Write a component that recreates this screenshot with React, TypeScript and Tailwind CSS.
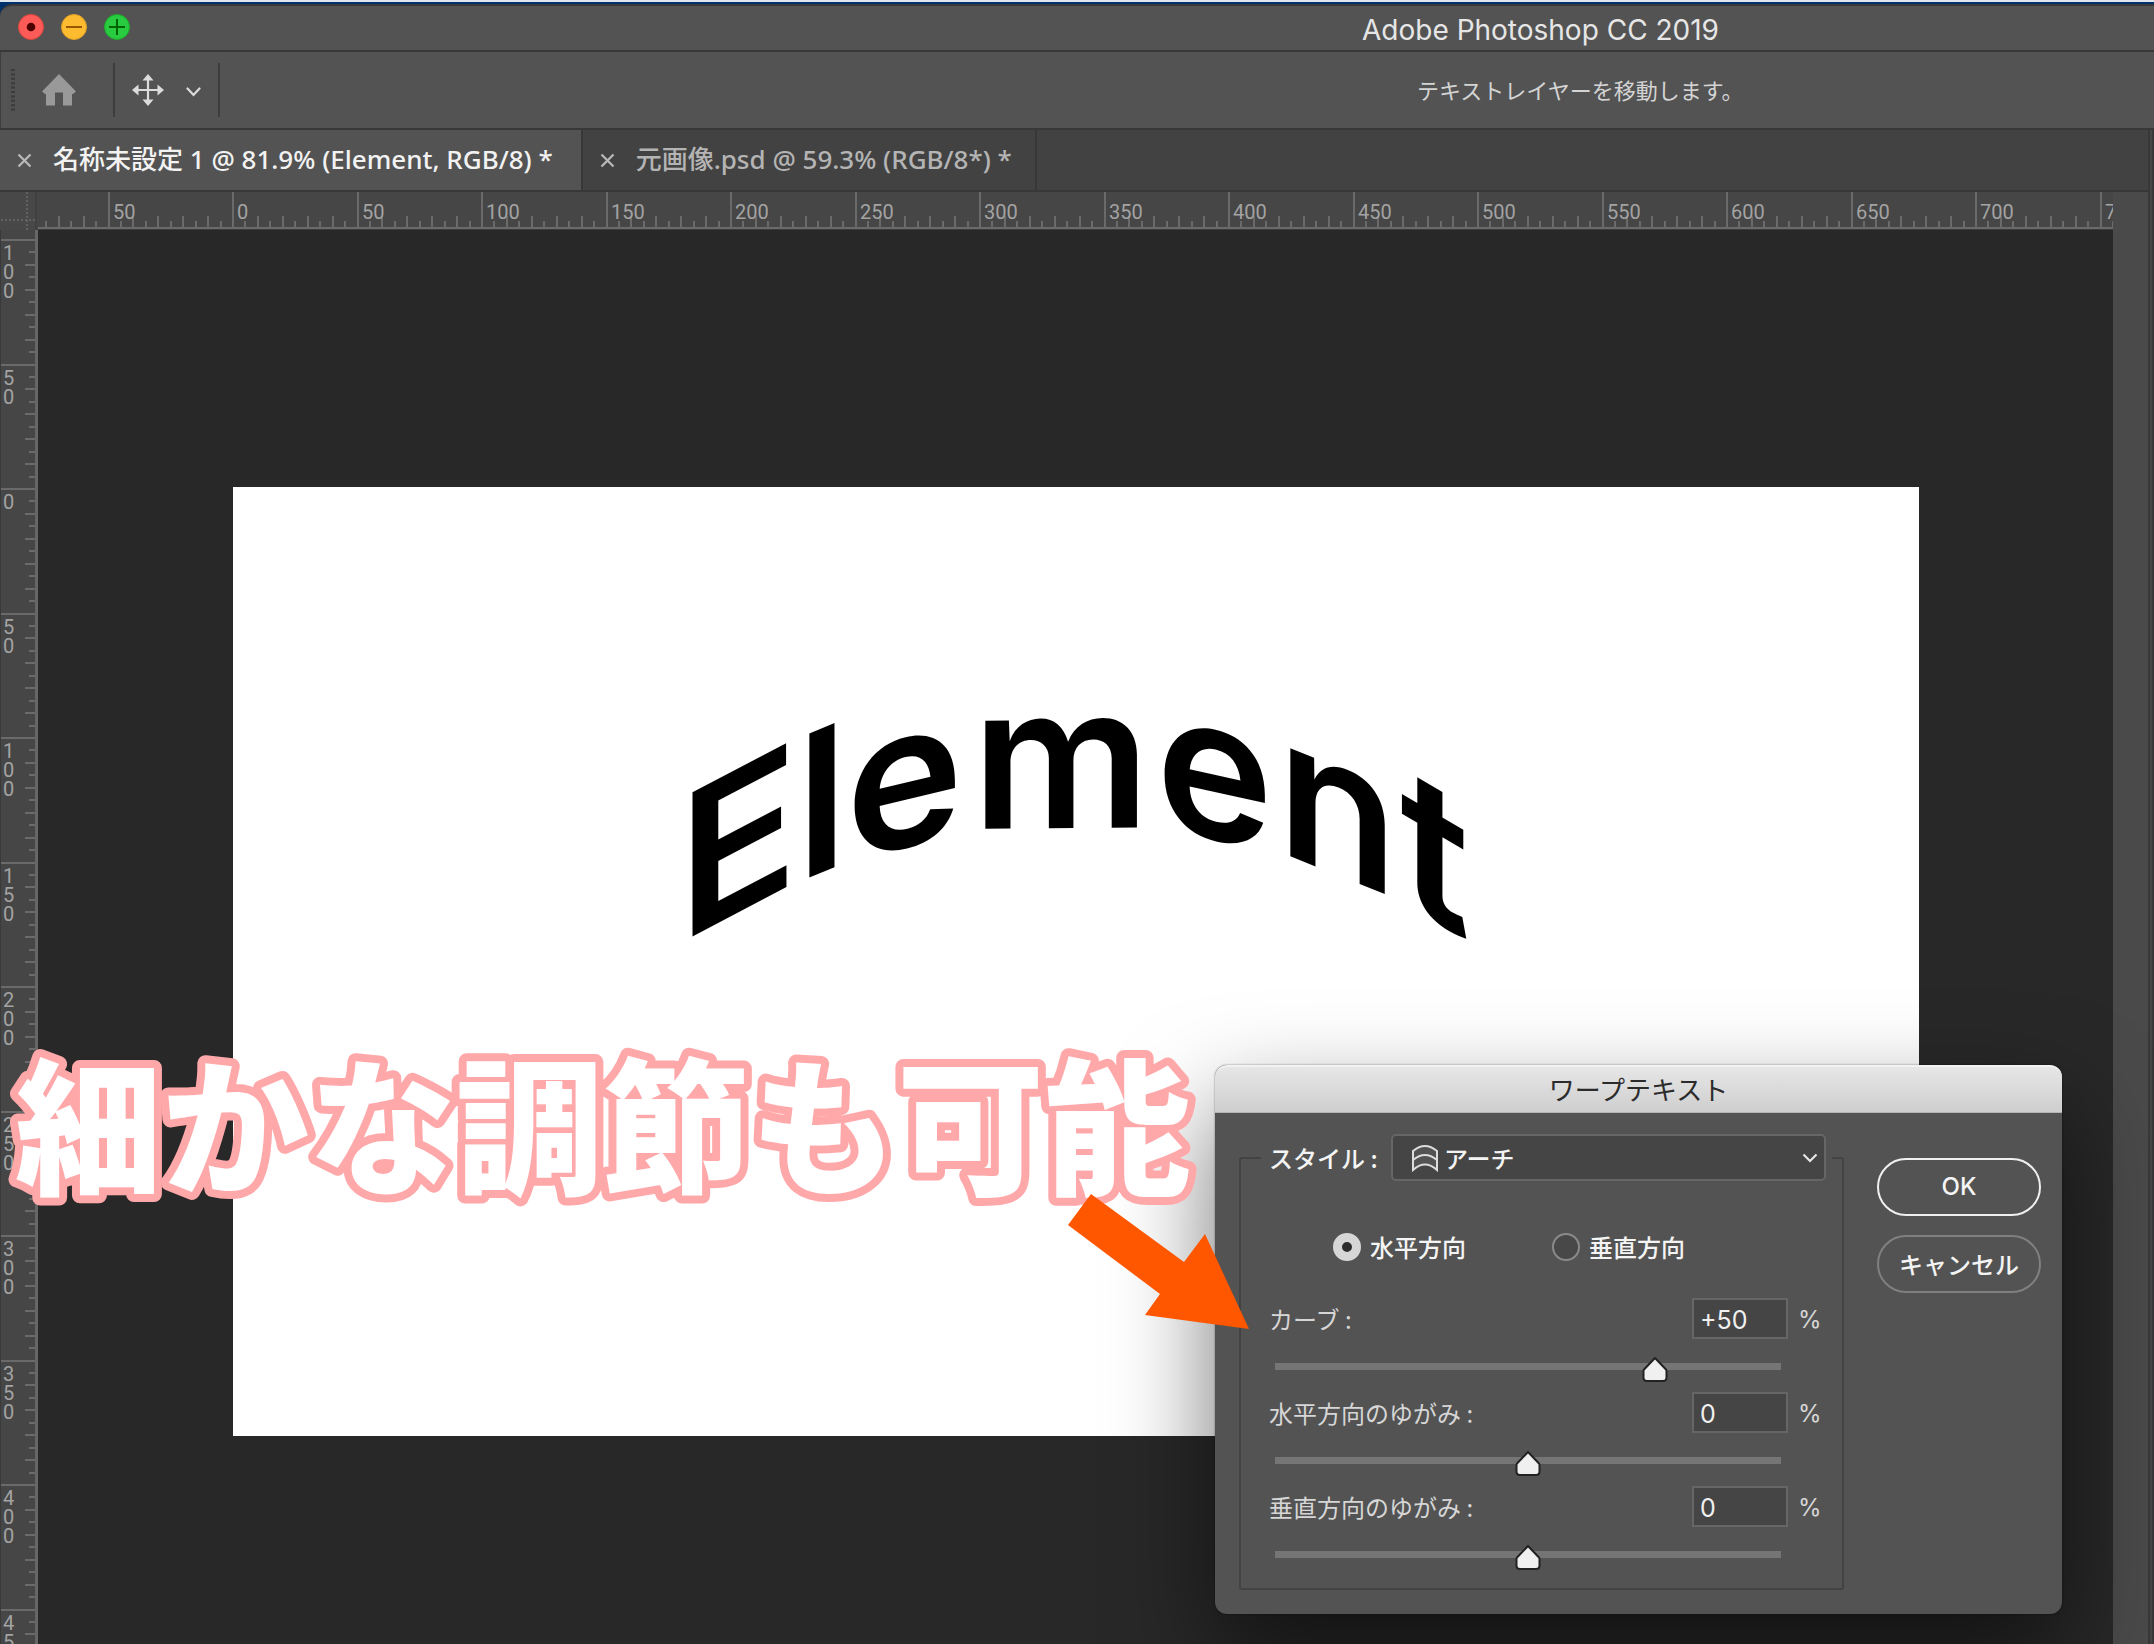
import { useState } from "react";

const STEP = 124.5;

/* Letters of the arch-warped text layer: baseline origin and vertical shear. */
const ARCH = [
  { ch: "E", x: 445, y: 457, k: -0.525 },
  { ch: "l", x: 563, y: 396, k: -0.41 },
  { ch: "e", x: 613, y: 374, k: -0.24 },
  { ch: "m", x: 739, y: 342, k: -0.01 },
  { ch: "e", x: 923, y: 339, k: 0.22 },
  { ch: "n", x: 1044, y: 364, k: 0.4 },
  { ch: "t", x: 1167, y: 414, k: 0.58 },
];

function TitleBar() {
  return (
    <header className="h-[52px] shrink-0 bg-[#01316a] border-t-2 border-[#dfe6ee] pt-[2px]">
      <div className="flex h-full rounded-tl-xl bg-[#535353] border-t-2 border-b-2 border-[#383838] items-center">
        <div className="flex items-center gap-[17px] pl-[18px] pb-[2px] w-[927px] shrink-0">
          <button aria-label="閉じる" className="size-[26px]">
            <svg viewBox="0 0 26 26"><circle cx="13" cy="13" r="12.5" fill="#fc5b57" stroke="#e2463f" /><circle cx="13" cy="13" r="4.3" fill="#4d0000" /></svg>
          </button>
          <button aria-label="しまう" className="size-[26px]">
            <svg viewBox="0 0 26 26"><circle cx="13" cy="13" r="12.5" fill="#fdbc2f" stroke="#e0a028" /><path d="M5 13h16" stroke="#985700" strokeWidth="2" /></svg>
          </button>
          <button aria-label="拡大" className="size-[26px]">
            <svg viewBox="0 0 26 26"><circle cx="13" cy="13" r="12.5" fill="#29cc41" stroke="#1aab29" /><path d="M5 13h16M13 5v16" stroke="#006500" strokeWidth="2" /></svg>
          </button>
        </div>
        <h1 className="flex-1 pt-[4px] text-center font-['Inter',sans-serif] text-[28px] leading-[32px] text-[#e6e6e6] whitespace-nowrap">
          Adobe Photoshop CC 2019
        </h1>
      </div>
    </header>
  );
}

function OptionsBar() {
  return (
    <div className="flex h-[78px] shrink-0 items-center bg-[#535353] border-b-2 border-[#383838] border-l border-l-[#3f3f3f]">
      <svg className="w-[4px] h-[42px] ml-[10px] shrink-0" viewBox="0 0 4 42">
        <path d="M2 0v42" stroke="#3b3b3b" strokeWidth="4" strokeDasharray="2 2.4" />
      </svg>
      <button aria-label="ホーム" className="ml-[27px]">
        <svg width="34" height="32" viewBox="0 0 34 32"><path d="M17 0L34 17.5L31 20H30V31.5H21V18.5H13V31.5H4V20H3L0 17.5Z" fill="#999" /></svg>
      </button>
      <div className="ml-[37px] h-[54px] w-[2px] bg-[#3d3d3d]" />
      <button aria-label="移動ツール" className="ml-[17px]">
        <svg width="32" height="32" viewBox="0 0 32 32">
          <path d="M16 4v24M4 16h24" stroke="#dcdcdc" strokeWidth="2.2" />
          <path d="M16 0l5.5 6.5h-11zM16 32l5.5-6.5h-11zM0 16l6.5-5.5v11zM32 16l-6.5-5.5v11z" fill="#dcdcdc" />
        </svg>
      </button>
      <button aria-label="ツールプリセット" className="ml-[22px] mt-[4px]">
        <svg width="15" height="10" viewBox="0 0 15 10"><path d="M1.5 1.5l6 6.5l6-6.5" fill="none" stroke="#dcdcdc" strokeWidth="2.2" strokeLinecap="round" /></svg>
      </button>
      <div className="ml-[17px] h-[54px] w-[2px] bg-[#3d3d3d]" />
      <p className="ml-[1197px] pb-[2px] text-[22px] leading-[30px] text-[#d4d4d4] whitespace-nowrap">テキストレイヤーを移動します。</p>
    </div>
  );
}

function Tab({ title, active }: { title: string; active?: boolean }) {
  return (
    <div className={active ? "flex items-center bg-[#535353] text-[#f2f2f2] border-r-2 border-[#383838] pl-[17px] pr-[28px]" : "flex items-center bg-[#424242] text-[#b4b4b4] border-r-2 border-[#383838] pl-[17px] pr-[23px]"}>
      <button aria-label={title + " を閉じる"} className="mr-[21px]">
        <svg width="15" height="15" viewBox="0 0 15 15"><path d="M1.5 1.5l12 12M13.5 1.5l-12 12" stroke="#b8b8b8" strokeWidth="2.3" /></svg>
      </button>
      <button className="pb-[2px] font-['Noto_Sans','Noto_Sans_CJK_JP',sans-serif] font-medium text-[26px] leading-[34px] whitespace-nowrap">{title}</button>
    </div>
  );
}

function HorizontalRuler() {
  const ticks = Array.from({ length: 175 }, (_, i) => i - 15);
  return (
    <svg className="h-[38px] w-full bg-[#464646] font-['Roboto',sans-serif]" fontSize="20" fill="#a3a3a3">
      {ticks.map((i) => {
        const x = Math.round(195 + (i * STEP) / 10);
        const major = i % 10 === 0;
        const h = major ? 36 : i % 2 === 0 ? 12 : 7;
        return <rect key={i} x={x - 1} y={36 - h} width={2} height={h} fill="#6a6a6a" />;
      })}
      {ticks.filter((i) => i % 10 === 0).map((i) => (
        <text key={i} x={Math.round(199 + (i * STEP) / 10)} y="27">{Math.abs(i * 5)}</text>
      ))}
      <rect y="35" width="100%" height="2" fill="#6a6a6a" />
      <rect y="37" width="100%" height="1" fill="#3c3c3c" />
    </svg>
  );
}

function VerticalRuler() {
  const ticks = Array.from({ length: 120 }, (_, i) => i - 20);
  return (
    <svg className="w-[38px] h-full bg-[#464646] font-['Roboto',sans-serif]" fontSize="20" fill="#a3a3a3">
      {ticks.map((i) => {
        const y = Math.round(258 + (i * STEP) / 10);
        const major = i % 10 === 0;
        const w = major ? 35 : i % 2 === 0 ? 11 : 7;
        return <rect key={i} x={36 - w} y={y} width={w} height={2} fill="#6a6a6a" />;
      })}
      {ticks.filter((i) => i % 10 === 0).map((i) =>
        String(Math.abs(i * 5)).split("").map((d, n) => (
          <text key={i + "-" + n} x="3" y={Math.round(279 + (i * STEP) / 10 + n * 19)}>{d}</text>
        ))
      )}
      <rect x="35" width="3" height="100%" fill="#666" />
      <rect width="1" height="100%" fill="#3a3a3a" />
    </svg>
  );
}

function Artboard() {
  return (
    <div className="ml-[195px] mt-[257px] h-[949px] w-[1686px] shrink-0 bg-white">
      <svg width="1686" height="949" className="font-['Inter',sans-serif]" fontSize="198" fontWeight="600" fill="#000" aria-label="Element">
        {ARCH.map((l, i) => (
          <text key={i} transform={`matrix(1 ${l.k} 0 1 ${l.x} ${l.y})`}>{l.ch}</text>
        ))}
      </svg>
    </div>
  );
}

function Slider({ label, start, signed }: { label: string; start: number; signed?: boolean }) {
  const [value, setValue] = useState(start);
  const text = signed && value > 0 ? "+" + value : String(value);
  return (
    <div>
      <div className="flex h-[41px] items-center pl-[28px] pr-[20px] text-[#d6d6d6]">
        <label htmlFor={label} className="flex-1 whitespace-nowrap">{label} :</label>
        <input
          id={label}
          value={text}
          onChange={(e) => setValue(Math.max(-100, Math.min(100, Number(e.target.value) || 0)))}
          className="h-[41px] w-[96px] border-2 border-[#666] bg-[#454545] pt-[2px] pl-[6px] font-['Inter',sans-serif] text-[25px] text-[#f0f0f0] outline-none"
        />
        <span className="ml-[10px] w-[24px] pt-[2px] font-['Inter',sans-serif] text-[24px]">%</span>
      </div>
      <div className="relative mt-[16px] ml-[34px] mr-[61px] h-[28px]">
        <div className="absolute inset-x-0 top-[8px] h-[7px] bg-[#757575]" />
        <svg className="absolute top-0 -translate-x-1/2" style={{ left: (value + 100) / 2 + "%" }} width="27" height="28" viewBox="0 0 27 28">
          <path d="M13.5 3L24.5 14.5Q25 15.2 25 16V22.5Q25 26 21.5 26H5.5Q2 26 2 22.5V16Q2 15.2 2.5 14.5Z" fill="#f0f0f0" stroke="#222" strokeWidth="2" strokeLinejoin="round" />
        </svg>
        <input type="range" aria-label={label} min={-100} max={100} value={value} onChange={(e) => setValue(Number(e.target.value))} className="absolute inset-0 w-full opacity-0" />
      </div>
    </div>
  );
}

const RADIO =
  "size-[28px] appearance-none rounded-full border-2 border-[#8a8a8a] bg-[#484848] checked:border-[9px] checked:border-[#d6d6d6] checked:bg-[#2d2d2d]";

function WarpDialog() {
  return (
    <section role="dialog" aria-label="ワープテキスト" className="absolute right-[92px] top-[1065px] w-[847px] rounded-xl bg-[#535353] text-[24px] leading-[32px] text-[#f4f4f4] shadow-[0_44px_100px_rgba(0,0,0,0.55),0_0_2px_rgba(0,0,0,0.5)]">
      <h2 className="h-[48px] rounded-t-xl border-t-2 border-b border-t-[#f2f2f2] border-b-[#b5b5b5] bg-linear-to-b from-[#e6e6e6] to-[#cfcfcf] text-center text-[26px] leading-[43px] text-[#2b2b2b]">ワープテキスト</h2>
      <div className="flex pt-[21px] pr-[21px] pb-[24px] pl-[24px]">
        <fieldset className="min-w-0 flex-1 border-2 border-[#434343] rounded-[3px] pb-[17px]">
          <legend className="ml-[20px] flex h-[47px] w-[571px] items-center pl-[8px] pr-[6px]">
            <label htmlFor="style" className="flex-1 font-medium whitespace-nowrap">スタイル :</label>
            <span className="relative flex items-center">
              <select id="style" className="h-[47px] w-[435px] appearance-none rounded-[5px] border-2 border-[#666] bg-[#454545] pl-[51px] text-[24px] font-medium text-[#f4f4f4]">
                <option>アーチ</option>
                <option>旗</option>
                <option>波形</option>
              </select>
              <svg className="pointer-events-none absolute left-[20px]" width="28" height="28" viewBox="0 0 28 28" fill="#535353" stroke="#dcdcdc" strokeWidth="2">
                <path d="M2 26V7Q14 -3 26 7V26Q14 15 2 26Z" />
                <path d="M2 16Q14 6 26 16" fill="none" />
              </svg>
              <svg className="pointer-events-none absolute right-[8px]" width="16" height="10" viewBox="0 0 16 10"><path d="M1.5 1.5l6.5 6.5l6.5-6.5" fill="none" stroke="#e6e6e6" strokeWidth="2.2" /></svg>
            </span>
          </legend>
          <div className="mt-[52px] flex h-[28px] items-center pl-[92px] font-medium">
            <label className="flex items-center gap-[9px]"><input type="radio" name="direction" defaultChecked className={RADIO} />水平方向</label>
            <label className="ml-[86px] flex items-center gap-[9px]"><input type="radio" name="direction" className={RADIO} />垂直方向</label>
          </div>
          <div className="mt-[37px] flex flex-col gap-[9px]">
            <Slider label="カーブ" start={50} signed />
            <Slider label="水平方向のゆがみ" start={0} />
            <Slider label="垂直方向のゆがみ" start={0} />
          </div>
        </fieldset>
        <div className="ml-[33px] mt-[24px] flex w-[164px] flex-col gap-[19px]">
          <button className="h-[58px] rounded-full border-2 border-[#f0f0f0] font-['Inter',sans-serif] font-medium">OK</button>
          <button className="h-[58px] rounded-full border-2 border-[#808080] font-medium whitespace-nowrap">キャンセル</button>
        </div>
      </div>
    </section>
  );
}

export default function App() {
  return (
    <div className="relative flex h-screen w-full flex-col overflow-hidden bg-[#464646] font-['Noto_Sans_CJK_JP',sans-serif]">
      <TitleBar />
      <OptionsBar />
      <div className="flex min-h-0 flex-1">
        <div className="flex min-w-0 flex-1 flex-col">
          <nav className="flex h-[62px] shrink-0 border-b-2 border-[#383838] bg-[#424242]">
            <Tab title="名称未設定 1 @ 81.9% (Element, RGB/8) *" active />
            <Tab title="元画像.psd @ 59.3% (RGB/8*) *" />
          </nav>
          <div className="flex min-h-0 flex-1">
            <div className="flex w-[38px] shrink-0 flex-col">
              <svg className="h-[38px] w-[38px] shrink-0 bg-[#484848]" fill="none" stroke="#6a6a6a" strokeWidth="1.5" strokeDasharray="2 2">
                <path d="M27 0v38M1 28h36" />
                <path d="M36 0v38" stroke="#3e3e3e" strokeDasharray="0" />
              </svg>
              <VerticalRuler />
            </div>
            <div className="flex min-w-0 flex-1 flex-col">
              <HorizontalRuler />
              <main className="flex min-h-0 flex-1 items-start overflow-hidden bg-[#282828]">
                <Artboard />
              </main>
            </div>
            <div className="w-[35px] shrink-0 bg-[#4a4a4a]" />
          </div>
        </div>
        <div className="w-[6px] shrink-0 border-x-2 border-[#383838] bg-[#464646]" />
      </div>

      <WarpDialog />
      <svg className="pointer-events-none absolute left-0 top-[1030px] font-['Noto_Sans_CJK_JP',sans-serif]" width="1215" height="200">
        <text x="15" y="153" fontSize="147" fontWeight="900" fill="#fff" stroke="#ffa8aa" strokeWidth="16" strokeLinejoin="round" paintOrder="stroke">
          細かな調節も可能
        </text>
      </svg>
      <svg className="pointer-events-none absolute left-[1068px] top-[1194px]" width="182" height="136" viewBox="0 0 182 136">
        <path d="M23 0L116 68L137 40L181 135L77 121L92 100L0 31Z" fill="#ff5600" />
      </svg>
    </div>
  );
}
